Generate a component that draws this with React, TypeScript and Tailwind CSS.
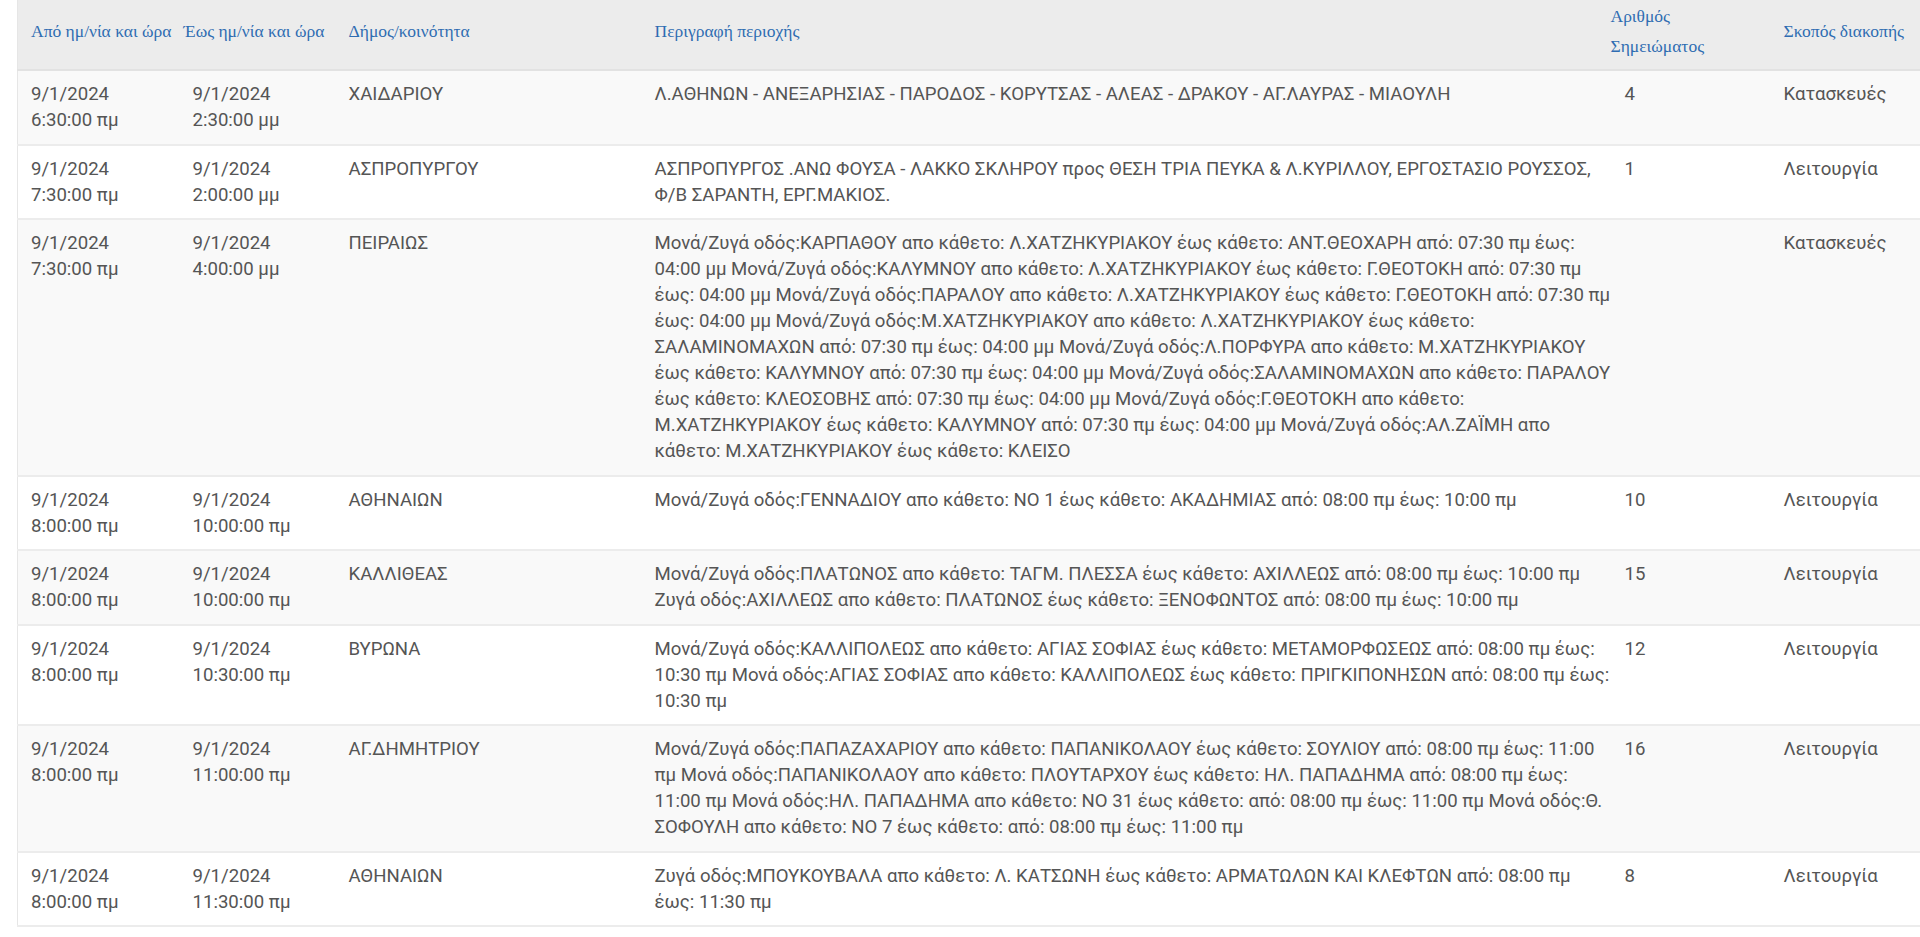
import React from "react";

type Row = {
  from: [string, string];
  to: [string, string];
  dimos: string;
  desc: string;
  num: string;
  purpose: string;
};

const rows: Row[] = [
  {
    from: ["9/1/2024", "6:30:00 πμ"],
    to: ["9/1/2024", "2:30:00 μμ"],
    dimos: "ΧΑΙΔΑΡΙΟΥ",
    desc: "Λ.ΑΘΗΝΩΝ - ΑΝΕΞΑΡΗΣΙΑΣ - ΠΑΡΟΔΟΣ - ΚΟΡΥΤΣΑΣ - ΑΛΕΑΣ - ΔΡΑΚΟΥ - ΑΓ.ΛΑΥΡΑΣ - ΜΙΑΟΥΛΗ",
    num: "4",
    purpose: "Κατασκευές",
  },
  {
    from: ["9/1/2024", "7:30:00 πμ"],
    to: ["9/1/2024", "2:00:00 μμ"],
    dimos: "ΑΣΠΡΟΠΥΡΓΟΥ",
    desc: "ΑΣΠΡΟΠΥΡΓΟΣ .ΑΝΩ ΦΟΥΣΑ - ΛΑΚΚΟ ΣΚΛΗΡΟΥ προς ΘΕΣΗ ΤΡΙΑ ΠΕΥΚΑ & Λ.ΚΥΡΙΛΛΟΥ, ΕΡΓΟΣΤΑΣΙΟ ΡΟΥΣΣΟΣ, Φ/Β ΣΑΡΑΝΤΗ, ΕΡΓ.ΜΑΚΙΟΣ.",
    num: "1",
    purpose: "Λειτουργία",
  },
  {
    from: ["9/1/2024", "7:30:00 πμ"],
    to: ["9/1/2024", "4:00:00 μμ"],
    dimos: "ΠΕΙΡΑΙΩΣ",
    desc: "Μονά/Ζυγά οδός:ΚΑΡΠΑΘΟΥ απο κάθετο: Λ.ΧΑΤΖΗΚΥΡΙΑΚΟΥ έως κάθετο: ΑΝΤ.ΘΕΟΧΑΡΗ από: 07:30 πμ έως: 04:00 μμ Μονά/Ζυγά οδός:ΚΑΛΥΜΝΟΥ απο κάθετο: Λ.ΧΑΤΖΗΚΥΡΙΑΚΟΥ έως κάθετο: Γ.ΘΕΟΤΟΚΗ από: 07:30 πμ έως: 04:00 μμ Μονά/Ζυγά οδός:ΠΑΡΑΛΟΥ απο κάθετο: Λ.ΧΑΤΖΗΚΥΡΙΑΚΟΥ έως κάθετο: Γ.ΘΕΟΤΟΚΗ από: 07:30 πμ έως: 04:00 μμ Μονά/Ζυγά οδός:Μ.ΧΑΤΖΗΚΥΡΙΑΚΟΥ απο κάθετο: Λ.ΧΑΤΖΗΚΥΡΙΑΚΟΥ έως κάθετο: ΣΑΛΑΜΙΝΟΜΑΧΩΝ από: 07:30 πμ έως: 04:00 μμ Μονά/Ζυγά οδός:Λ.ΠΟΡΦΥΡΑ απο κάθετο: Μ.ΧΑΤΖΗΚΥΡΙΑΚΟΥ έως κάθετο: ΚΑΛΥΜΝΟΥ από: 07:30 πμ έως: 04:00 μμ Μονά/Ζυγά οδός:ΣΑΛΑΜΙΝΟΜΑΧΩΝ απο κάθετο: ΠΑΡΑΛΟΥ έως κάθετο: ΚΛΕΟΣΟΒΗΣ από: 07:30 πμ έως: 04:00 μμ Μονά/Ζυγά οδός:Γ.ΘΕΟΤΟΚΗ απο κάθετο: Μ.ΧΑΤΖΗΚΥΡΙΑΚΟΥ έως κάθετο: ΚΑΛΥΜΝΟΥ από: 07:30 πμ έως: 04:00 μμ Μονά/Ζυγά οδός:ΑΛ.ΖΑΪΜΗ απο κάθετο: Μ.ΧΑΤΖΗΚΥΡΙΑΚΟΥ έως κάθετο: ΚΛΕΙΣΟ",
    num: "",
    purpose: "Κατασκευές",
  },
  {
    from: ["9/1/2024", "8:00:00 πμ"],
    to: ["9/1/2024", "10:00:00 πμ"],
    dimos: "ΑΘΗΝΑΙΩΝ",
    desc: "Μονά/Ζυγά οδός:ΓΕΝΝΑΔΙΟΥ απο κάθετο: ΝΟ 1 έως κάθετο: ΑΚΑΔΗΜΙΑΣ από: 08:00 πμ έως: 10:00 πμ",
    num: "10",
    purpose: "Λειτουργία",
  },
  {
    from: ["9/1/2024", "8:00:00 πμ"],
    to: ["9/1/2024", "10:00:00 πμ"],
    dimos: "ΚΑΛΛΙΘΕΑΣ",
    desc: "Μονά/Ζυγά οδός:ΠΛΑΤΩΝΟΣ απο κάθετο: ΤΑΓΜ. ΠΛΕΣΣΑ έως κάθετο: ΑΧΙΛΛΕΩΣ από: 08:00 πμ έως: 10:00 πμ Ζυγά οδός:ΑΧΙΛΛΕΩΣ απο κάθετο: ΠΛΑΤΩΝΟΣ έως κάθετο: ΞΕΝΟΦΩΝΤΟΣ από: 08:00 πμ έως: 10:00 πμ",
    num: "15",
    purpose: "Λειτουργία",
  },
  {
    from: ["9/1/2024", "8:00:00 πμ"],
    to: ["9/1/2024", "10:30:00 πμ"],
    dimos: "ΒΥΡΩΝΑ",
    desc: "Μονά/Ζυγά οδός:ΚΑΛΛΙΠΟΛΕΩΣ απο κάθετο: ΑΓΙΑΣ ΣΟΦΙΑΣ έως κάθετο: ΜΕΤΑΜΟΡΦΩΣΕΩΣ από: 08:00 πμ έως: 10:30 πμ Μονά οδός:ΑΓΙΑΣ ΣΟΦΙΑΣ απο κάθετο: ΚΑΛΛΙΠΟΛΕΩΣ έως κάθετο: ΠΡΙΓΚΙΠΟΝΗΣΩΝ από: 08:00 πμ έως: 10:30 πμ",
    num: "12",
    purpose: "Λειτουργία",
  },
  {
    from: ["9/1/2024", "8:00:00 πμ"],
    to: ["9/1/2024", "11:00:00 πμ"],
    dimos: "ΑΓ.ΔΗΜΗΤΡΙΟΥ",
    desc: "Μονά/Ζυγά οδός:ΠΑΠΑΖΑΧΑΡΙΟΥ απο κάθετο: ΠΑΠΑΝΙΚΟΛΑΟΥ έως κάθετο: ΣΟΥΛΙΟΥ από: 08:00 πμ έως: 11:00 πμ Μονά οδός:ΠΑΠΑΝΙΚΟΛΑΟΥ απο κάθετο: ΠΛΟΥΤΑΡΧΟΥ έως κάθετο: ΗΛ. ΠΑΠΑΔΗΜΑ από: 08:00 πμ έως: 11:00 πμ Μονά οδός:ΗΛ. ΠΑΠΑΔΗΜΑ απο κάθετο: ΝΟ 31 έως κάθετο: από: 08:00 πμ έως: 11:00 πμ Μονά οδός:Θ. ΣΟΦΟΥΛΗ απο κάθετο: ΝΟ 7 έως κάθετο: από: 08:00 πμ έως: 11:00 πμ",
    num: "16",
    purpose: "Λειτουργία",
  },
  {
    from: ["9/1/2024", "8:00:00 πμ"],
    to: ["9/1/2024", "11:30:00 πμ"],
    dimos: "ΑΘΗΝΑΙΩΝ",
    desc: "Ζυγά οδός:ΜΠΟΥΚΟΥΒΑΛΑ απο κάθετο: Λ. ΚΑΤΣΩΝΗ έως κάθετο: ΑΡΜΑΤΩΛΩΝ ΚΑΙ ΚΛΕΦΤΩΝ από: 08:00 πμ έως: 11:30 πμ",
    num: "8",
    purpose: "Λειτουργία",
  },
];

const th =
  "pt-0 pb-[7px] align-middle text-left font-normal whitespace-nowrap text-[17.5px] leading-[30px] text-[#2f6cb2]";
const td = "pt-[10px] pb-[10.5px] align-top";

const noSlashBreak = (s: string) => s.replace(/\//g, "/\u2060");

export default function App() {
  return (
    <div className="min-h-[937px] bg-white pl-[17px]">
      <table
        className="w-[1903px] table-fixed border-collapse border-l border-l-[#e6e6e6] text-[18.6px] leading-[26px] text-[#555555]"
        style={{ fontFamily: "Roboto, 'Noto Sans', sans-serif" }}
      >
        <colgroup>
          <col className="w-[162px]" />
          <col className="w-[156px]" />
          <col className="w-[306px]" />
          <col className="w-[975px]" />
          <col className="w-[154px]" />
          <col />
        </colgroup>
        <thead>
          <tr
            className="h-[70px] bg-[#ececec] border-b-2 border-b-[#e2e2e2]"
            style={{ fontFamily: "'Liberation Serif', 'DejaVu Serif', serif" }}
          >
            <th className={th + " px-[13px]"}>Από ημ/νία και ώρα</th>
            <th className={th + " pl-[4px] pr-[13px]"}>Έως ημ/νία και ώρα</th>
            <th className={th + " px-[13px]"}>Δήμος/κοινότητα</th>
            <th className={th + " px-[13px]"}>Περιγραφή περιοχής</th>
            <th className={th + " pl-0 pr-[8px]"}>
              <div className="-ml-[6px]">
                Αριθμός
                <br />
                Σημειώματος
              </div>
            </th>
            <th className={th + " px-[13px]"}>Σκοπός διακοπής</th>
          </tr>
        </thead>
        <tbody>
          {rows.map((r, i) => (
            <tr
              key={i}
              className={
                (i % 2 === 0 ? "bg-[#f9f9f9]" : "bg-white") +
                " border-b-2 border-b-[#ececec]"
              }
            >
              <td className={td + " px-[13px]"}>
                {r.from[0]}
                <br />
                {r.from[1]}
              </td>
              <td className={td + " px-[13px]"}>
                {r.to[0]}
                <br />
                {r.to[1]}
              </td>
              <td className={td + " px-[13px]"}>{r.dimos}</td>
              <td className={td + " pl-[13px] pr-[3px]"}>{noSlashBreak(r.desc)}</td>
              <td className={td + " pl-[8px] pr-[8px]"}>{r.num}</td>
              <td className={td + " px-[13px]"}>{r.purpose}</td>
            </tr>
          ))}
        </tbody>
      </table>
    </div>
  );
}
